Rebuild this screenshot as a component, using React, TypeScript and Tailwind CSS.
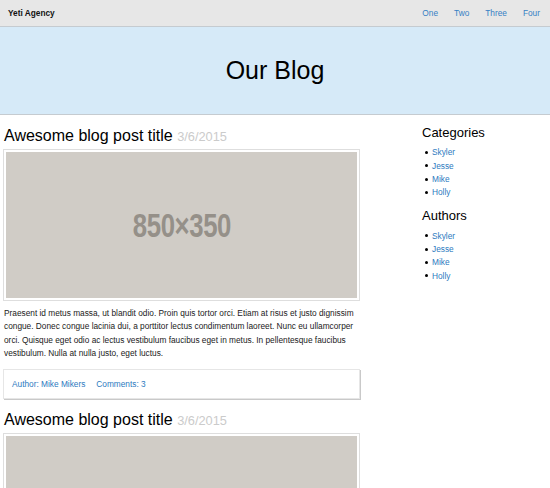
import React from "react";

const font = { fontFamily: '"Liberation Sans", Arial, sans-serif' };

function Post() {
  return (
    <div className="mt-[11px]">
      <h2 className="text-[16px] leading-[20px] text-black mb-[2px] pl-[1px]">
        Awesome blog post title{" "}
        <span className="text-[12.8px] text-[#cbcbcb]">3/6/2015</span>
      </h2>
      <div className="border border-[#dedede] p-[2px]">
        <div className="h-[146px] bg-[#d0ccc6] flex items-center justify-center overflow-hidden">
          <span className="text-[33px] font-bold text-[#959089] scale-x-[0.78] tracking-[-0.5px] leading-none">
            850×350
          </span>
        </div>
      </div>
      <p className="mt-[6px] text-[8.3px] leading-[13.3px] text-[#1a1a1a] pl-[1px] pr-[2px]">
        Praesent id metus massa, ut blandit odio. Proin quis tortor orci. Etiam at risus et justo dignissim
        congue. Donec congue lacinia dui, a porttitor lectus condimentum laoreet. Nunc eu ullamcorper
        orci. Quisque eget odio ac lectus vestibulum faucibus eget in metus. In pellentesque faucibus
        vestibulum. Nulla at nulla justo, eget luctus.
      </p>
      <div className="mt-[9px] h-[30px] border border-[#e6e6e6] shadow-[1px_1px_0_#c9c9c9] flex items-center pl-[8px] text-[8.3px] text-[#2c7ac0]">
        <span>Author: Mike Mikers</span>
        <span className="ml-[11px]">Comments: 3</span>
      </div>
    </div>
  );
}

function SideList({ items }: { items: string[] }) {
  return (
    <ul className="mt-[5px]">
      {items.map((it) => (
        <li key={it} className="flex items-center h-[13.3px] pl-[3px] text-[8.3px] text-[#2c7ac0]">
          <span className="w-[3px] h-[3px] rounded-full bg-black" />
          <span className="ml-[4px]">{it}</span>
        </li>
      ))}
    </ul>
  );
}

export default function App() {
  const names = ["Skyler", "Jesse", "Mike", "Holly"];
  return (
    <div style={font} className="w-[550px] h-[488px] overflow-hidden bg-white">
      <div className="h-[27px] bg-[#e7e7e7] border-b border-[#c5cbd0] flex items-center justify-between pl-[8px] pr-[10px] text-[8.3px]">
        <span className="font-bold text-[#111]">Yeti Agency</span>
        <div className="flex gap-4 text-[#3580c4]">
          <span>One</span>
          <span>Two</span>
          <span>Three</span>
          <span>Four</span>
        </div>
      </div>
      <div className="h-[88px] bg-[#d6eaf8] border-b border-[#c5cbd0] flex items-center justify-center">
        <h1 className="text-[25px] leading-none text-black">Our Blog</h1>
      </div>
      <div className="flex px-[3px]">
        <div className="w-[357px]">
          <Post />
          <Post />
        </div>
        <div className="ml-[62px]">
          <h3 className="mt-[10px] text-[13px] leading-[16px] text-black">Categories</h3>
          <SideList items={names} />
          <h3 className="mt-[9px] text-[13px] leading-[16px] text-black">Authors</h3>
          <SideList items={names} />
        </div>
      </div>
    </div>
  );
}
